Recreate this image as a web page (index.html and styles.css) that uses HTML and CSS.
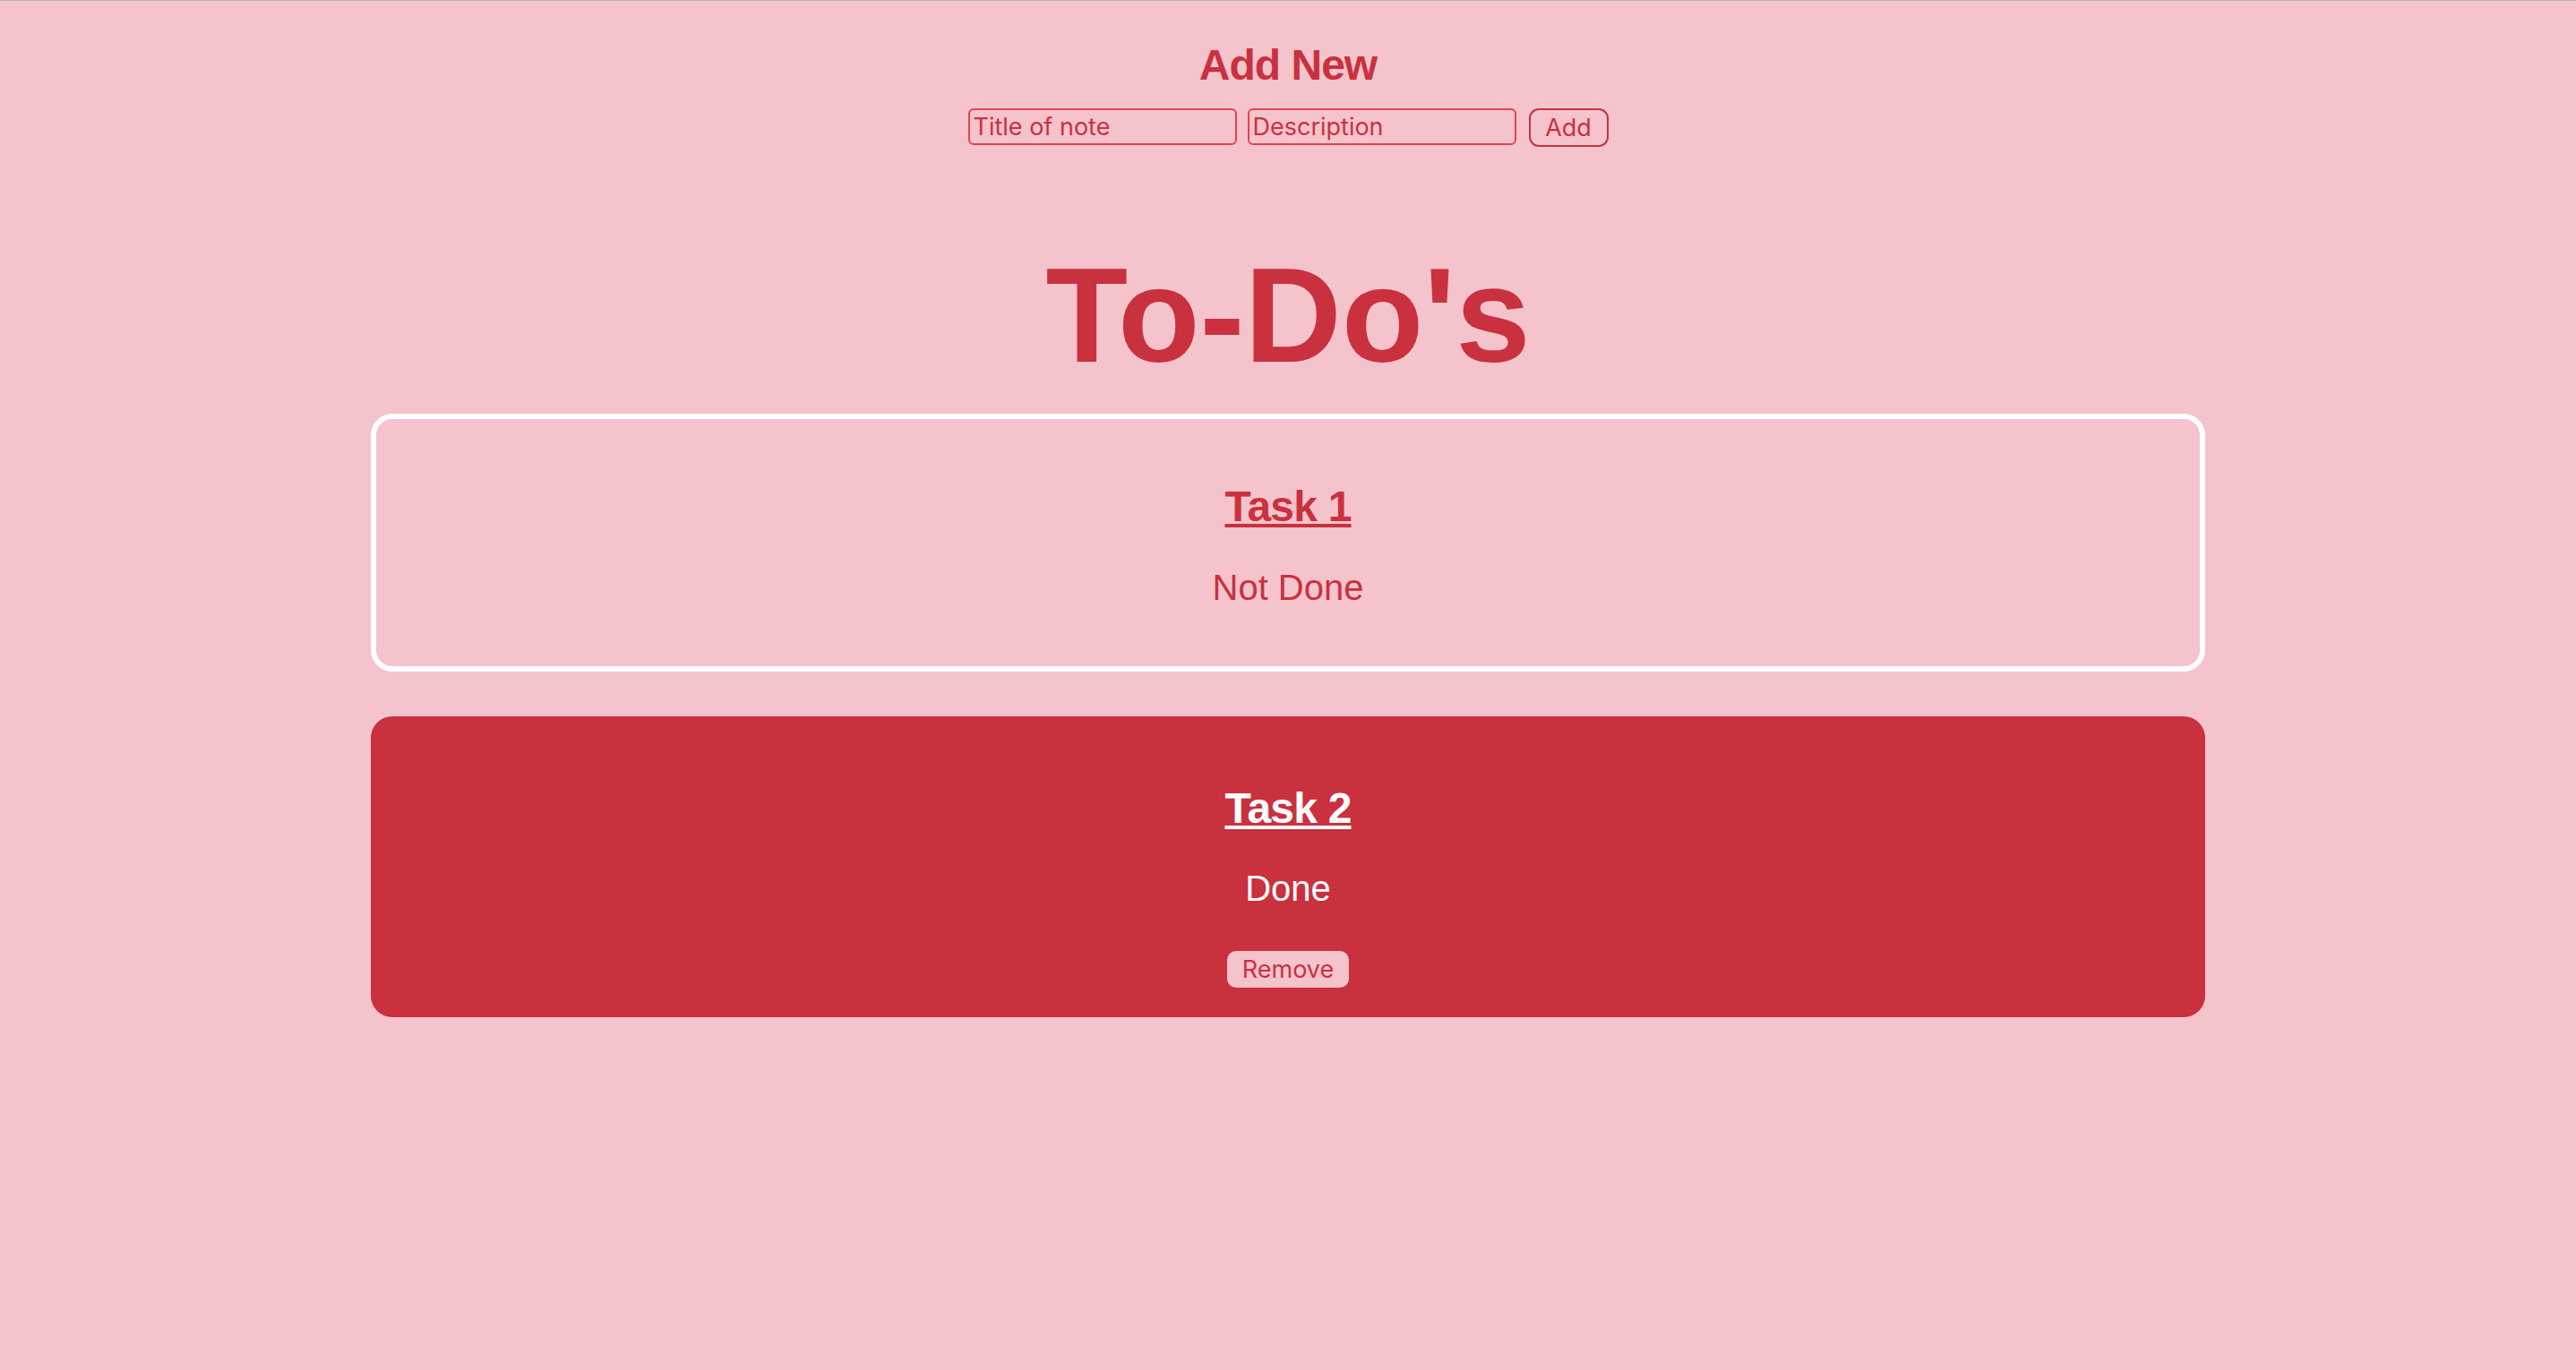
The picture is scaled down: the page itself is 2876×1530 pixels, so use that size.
FILE: index.html
```html
<!DOCTYPE html>
<html lang="en">
<head>
<meta charset="utf-8">
<title>To-Do's</title>
<link rel="stylesheet" href="styles.css">
</head>
<body>
  <header class="header">
    <h2 class="header-title">Add New</h2>
    <form class="add-form">
      <input class="field" type="text" placeholder="Title of note">
      <input class="field" type="text" placeholder="Description">
      <button class="add-btn" type="button">Add</button>
    </form>
  </header>
  <h1 class="title">To-Do's</h1>
  <main class="list">
    <section class="card card-open">
      <h2 class="card-title">Task 1</h2>
      <p class="card-status">Not Done</p>
    </section>
    <section class="card card-done">
      <h2 class="card-title">Task 2</h2>
      <p class="card-status">Done</p>
      <button class="remove-btn" type="button">Remove</button>
    </section>
  </main>
</body>
</html>
```
FILE: styles.css
```css
html, body {
  margin: 0;
  padding: 0;
}

body {
  background: #f5c3cb;
  border-top: 1px solid #b9b3b5;
  min-height: 100vh;
  box-sizing: border-box;
  font-family: "Liberation Sans", Arial, sans-serif;
  color: #c9313f;
}

.header {
  padding-top: 44px;
  text-align: center;
}

.header-title {
  margin: 0;
  font-size: 48px;
  line-height: 56px;
  font-weight: 700;
  letter-spacing: -1px;
}

.add-form {
  display: flex;
  justify-content: center;
  align-items: flex-start;
  gap: 12px;
  margin: 20px 0 0;
}

.field {
  width: 300px;
  height: 41px;
  box-sizing: border-box;
  border: 2px solid #e5424f;
  border-radius: 6px;
  background: transparent;
  padding: 0 4px;
  font-family: Inter, "Liberation Sans", sans-serif;
  font-size: 27px;
  color: #c9313f;
  outline: none;
}

.field::placeholder {
  color: #c9313f;
  opacity: 1;
}

.add-btn {
  margin-left: 2px;
  width: 89px;
  height: 43px;
  box-sizing: border-box;
  border: 2px solid #c9313f;
  border-radius: 11px;
  background: transparent;
  padding: 0;
  font-family: Inter, "Liberation Sans", sans-serif;
  font-size: 27px;
  color: #c9313f;
}

.title {
  margin: 103px 0 0;
  font-size: 150px;
  line-height: 170px;
  font-weight: 700;
  text-align: center;
}

.list {
  width: 2048px;
  margin: 25px auto 0;
  display: flex;
  flex-direction: column;
  gap: 50px;
}

.card {
  box-sizing: border-box;
  border-radius: 24px;
  text-align: center;
}

.card-open {
  border: 6px solid #ffffff;
  padding: 70px 0 65px;
}

.card-done {
  background: #c9313f;
  color: #ffffff;
  padding: 75px 0 33px;
}

.card-title {
  margin: 0;
  font-size: 48px;
  line-height: 56px;
  font-weight: 700;
  letter-spacing: -0.8px;
  text-decoration: underline;
  text-decoration-thickness: 4px;
  text-underline-offset: 3px;
}

.card-status {
  margin: 39px 0 0;
  font-size: 40px;
  line-height: 46px;
}

.card-done .card-status {
  margin-top: 38px;
}

.remove-btn {
  display: block;
  margin: 47px auto 0;
  width: 136px;
  height: 41px;
  border: none;
  border-radius: 10px;
  background: #f5c3cb;
  padding: 0;
  font-family: Inter, "Liberation Sans", sans-serif;
  font-size: 27px;
  color: #c9313f;
}
```
